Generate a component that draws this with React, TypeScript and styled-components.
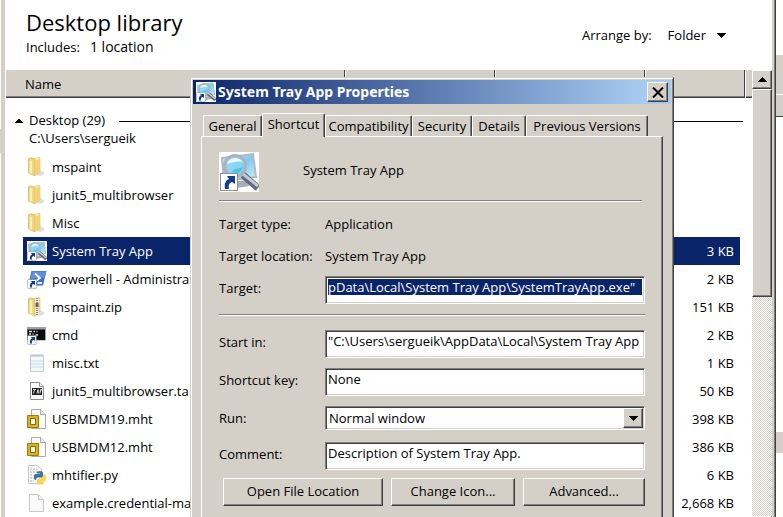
import React from "react";
import styled, { createGlobalStyle, css } from "styled-components";

const face = "#d4d0c8";
const shade = "#808080";
const dark = "#404040";
const navy = "#0a246a";

const Global = createGlobalStyle`
  *, *::before, *::after { box-sizing: border-box; }
  body { margin: 0; background: #fff; color: #000; font: 13px/18px "Open Sans", "Noto Sans", sans-serif; }
  button, input, select { font: inherit; color: inherit; margin: 0; border-radius: 0; outline: none; }
  svg { display: block; flex: none; }
`;

const raised = css`
  background: ${face};
  border: 1px solid;
  border-color: #fff ${dark} ${dark} #fff;
  box-shadow: inset -1px -1px 0 ${shade};
`;

const sunken = css`
  background-color: #fff;
  border: 1px solid;
  border-color: ${shade} #fff #fff ${shade};
  box-shadow: inset 1px 1px 0 ${dark}, inset -1px -1px 0 ${face};
`;

const Desktop = styled.div`
  position: relative;
  display: flex;
  height: 100vh;
  overflow: hidden;
`;

const LeftEdge = styled.div`
  flex: 0 0 5px;
  display: grid;
  grid-template-rows: 129px 24px 1fr;
  border-right: 4px solid ${face};
  & > :nth-child(2) { background: ${face}; }
`;

const RightEdge = styled.div`
  flex: 0 0 7px;
  display: grid;
  grid-template-rows: 55px 39px 23px 315px 21px 1fr;
  & > :nth-child(2), & > :nth-child(5) { background: ${face}; }
  & > :nth-child(3) { background: ${face}; border-top: 1px solid #fff; border-bottom: 1px solid ${dark}; }
`;

const Explorer = styled.main`
  flex: 1;
  min-width: 0;
  display: flex;
  flex-direction: column;
  border-right: 1px solid ${dark};
  box-shadow: inset -1px 0 0 ${shade}, inset -3px 0 0 ${face};
  padding-right: 3px;
`;

const LibraryBar = styled.header`
  flex: 0 0 70px;
  display: flex;
  justify-content: space-between;
  padding: 6px 46px 0 21px;
`;

const LibraryTitle = styled.h1`
  margin: 0;
  font-size: 22px;
  line-height: 32px;
  font-weight: 400;
`;

const Includes = styled.div`
  display: flex;
  gap: 10px;
`;

const LocationLink = styled.a`
  color: inherit;
  font-size: 14px;
  text-decoration: none;
`;

const Arrange = styled.div`
  display: flex;
  align-items: center;
  align-self: flex-start;
  gap: 16px;
  padding-top: 20px;
`;

const ArrangeButton = styled.button`
  display: flex;
  align-items: center;
  gap: 11px;
  padding: 0;
  border: 0;
  background: none;
`;

const Browser = styled.div`
  flex: 1;
  min-height: 0;
  display: flex;
`;

const Listing = styled.section`
  flex: 1;
  min-width: 0;
  overflow: hidden;
`;

const ColumnBar = styled.div`
  display: grid;
  grid-template-columns: 340px 150px 150px 100px 1fr;
  height: 28px;
  background: ${face};
  border-bottom: 1px solid ${dark};
  box-shadow: inset 0 -1px 0 ${shade};
`;

const Column = styled.div`
  padding: 5px 19px;
  border-left: 1px solid #fff;
  border-right: 1px solid ${dark};
  margin-bottom: 1px;
  &:last-child { border-right: 0; }
`;

const GroupHeading = styled.div`
  display: grid;
  grid-template-columns: 8px auto 1fr;
  align-items: center;
  column-gap: 6px;
  padding: 13px 9px 0 10px;
`;

const GroupName = styled.h2`
  margin: 0;
  font: inherit;
`;

const GroupRule = styled.span`
  height: 1px;
  margin: 2px 0 0 8px;
  background: #000;
`;

const GroupPath = styled.div`
  padding: 0 24px;
  height: 24px;
`;

const FileTable = styled.table`
  width: calc(100% - 30px);
  margin: 0 12px 0 18px;
  border-collapse: collapse;
`;

const FileRow = styled.tr<{ $selected?: boolean }>`
  height: 28px;
  ${(p) => p.$selected && css`background: ${navy}; color: #fff;`}
  td { padding: 0 6px 0 4px; }
  td:last-child { text-align: right; }
`;

const FileName = styled.div`
  display: flex;
  align-items: center;
  gap: 5px;
  white-space: nowrap;
`;

const Scrollbar = styled.div`
  flex: 0 0 20px;
  display: grid;
  grid-template-rows: 19px 208px 1fr 20px;
  margin-bottom: -19px;
  background: repeating-conic-gradient(#fff 0 25%, ${face} 0 50%) 0 0 / 2px 2px;
`;

const ScrollButton = styled.button`
  ${raised}
  display: grid;
  place-items: center;
  padding: 0;
`;

const Thumb = styled.div`
  ${raised}
`;

const Dialog = styled.section`
  position: absolute;
  top: 77px;
  left: 190px;
  right: 109px;
  padding: 2px;
  background: ${face};
  border: 1px solid;
  border-color: ${face} ${dark} ${dark} ${face};
  box-shadow: inset 1px 1px 0 #fff, inset -1px -1px 0 ${shade};
`;

const TitleBar = styled.div`
  display: flex;
  align-items: center;
  gap: 2px;
  height: 24px;
  padding: 0 3px;
  background: linear-gradient(90deg, ${navy}, #a6caf0 94%);
  color: #fff;
`;

const DialogTitle = styled.h2`
  flex: 1;
  margin: 0;
  font: bold 14px/20px "Noto Sans", "Open Sans", sans-serif;
`;

const CloseButton = styled.button`
  ${raised}
  display: grid;
  place-items: center;
  width: 21px;
  height: 20px;
  padding: 0;
`;

const Tabs = styled.div`
  display: flex;
  align-items: flex-end;
  height: 32px;
  padding: 0 10px;
`;

const Tab = styled.button<{ $width: number; $active?: boolean }>`
  width: ${(p) => p.$width}px;
  height: 21px;
  padding: 0;
  line-height: 18px;
  white-space: nowrap;
  background: ${face};
  border: 1px solid;
  border-color: #fff ${dark} transparent #fff;
  border-bottom: 0;
  border-radius: 2px 2px 0 0;
  box-shadow: inset -1px 0 0 ${shade};
  ${(p) => p.$active && css`
    position: relative;
    z-index: 1;
    height: 24px;
    margin-bottom: -1px;
    padding-bottom: 4px;
  `}
`;

const Panel = styled.form`
  margin: 0 8px;
  padding: 15px 17px 60px;
  border: 1px solid;
  border-color: #fff ${dark} ${dark} #fff;
  box-shadow: inset -1px -1px 0 ${shade};
`;

const Identity = styled.div`
  display: grid;
  grid-template-columns: 84px 1fr;
  align-items: center;
  height: 40px;
`;

const IdentityName = styled.span`
  padding-bottom: 4px;
`;

const Rule = styled.hr<{ $above: number; $below: number; $inset?: number }>`
  height: 2px;
  margin: ${(p) => p.$above}px ${(p) => p.$inset ?? 0}px ${(p) => p.$below}px 0;
  border: 0;
  background: linear-gradient(${shade} 50%, #fff 50%);
`;

const Field = styled.div<{ $height: number; $gap: number }>`
  display: grid;
  grid-template-columns: 106px 1fr;
  align-items: center;
  height: ${(p) => p.$height}px;
  margin-bottom: ${(p) => p.$gap}px;
`;

const BoxLabel = styled.label`
  padding-bottom: 4px;
`;

const TextBox = styled.input<{ $selected?: boolean }>`
  ${sunken}
  width: 100%;
  height: 28px;
  padding: 2px 2px 8px;
  line-height: 16px;
  ${(p) => p.$selected && css`
    color: #fff;
    background-image: linear-gradient(${navy}, ${navy});
    background-origin: content-box;
    background-size: 100% 16px;
    background-repeat: no-repeat;
  `}
`;

const SelectFrame = styled.div`
  ${sunken}
  display: grid;
  grid-template-columns: 1fr 20px;
  height: 24px;
  padding: 1px;
`;

const Select = styled.select`
  grid-area: 1 / 1 / 2 / 3;
  appearance: none;
  padding: 0 2px;
  border: 0;
  background: none;
  line-height: 18px;
`;

const SelectArrow = styled.span`
  ${raised}
  grid-area: 1 / 2;
  display: grid;
  place-items: center;
  pointer-events: none;
`;

const Actions = styled.div`
  display: grid;
  grid-template-columns: 160px 124px 122px;
  justify-content: end;
  gap: 8px;
`;

const ActionButton = styled.button`
  ${raised}
  height: 28px;
  padding: 0 0 2px;
`;

const Triangle = ({ up, w = 9 }: { up?: boolean; w?: number }) => (
  <svg width={w} height="5" viewBox="0 0 9 5" preserveAspectRatio="none" shapeRendering="crispEdges" aria-hidden="true">
    <path d={up ? "M0 5 4.5 0 9 5Z" : "M0 0 4.5 5 9 0Z"} />
  </svg>
);

const ShortcutArrow = () => (
  <g>
    <rect x="1.5" y="21.5" width="17" height="17" fill="#fff" stroke="#8a8f96" />
    <path d="M6 37c-1-6 1-9 4-10l-2-3h8v8l-3-2c-3 1-4 4-3 7Z" fill="#123f88" />
  </g>
);

const TrayIcon = ({ size }: { size: number }) => (
  <svg width={size} height={size} viewBox="0 0 40 40" aria-hidden="true">
    <defs>
      <linearGradient id={`tray${size}`} x1="0" y1="0" x2="1" y2="1">
        <stop offset="0" stopColor="#d9f3ff" />
        <stop offset="0.5" stopColor="#7dcaf0" />
        <stop offset="1" stopColor="#d2effc" />
      </linearGradient>
    </defs>
    <path fill="#fff" d="M0 0h40v40H0z" />
    <path d="M3 6 34 2l3 23-32 4Z" fill={`url(#tray${size})`} stroke="#b4b9bf" strokeWidth="2" />
    <path d="m10 30 18-2 2 6-18 3Z" fill="#a9aeb5" />
    <path d="m24 23 15 13" stroke="#636b78" strokeWidth="7" />
    <path d="m24 22 15 12" stroke="#c4cad4" strokeWidth="3" />
    <circle cx="16" cy="14" r="10.5" fill="#8bd6f5" fillOpacity=".75" stroke="#a9b4bf" strokeWidth="3" />
    <path d="M8 12c2-7 12-8 16-2-5-1-10 0-16 2Z" fill="#e7faff" />
    <path d="M13 19c4-3 8-2 11-4-1 6-7 8-11 4Z" fill="#4cc7dc" />
    <ShortcutArrow />
  </svg>
);

const FolderIcon = ({ zip }: { zip?: boolean }) => (
  <svg width="20" height="20" viewBox="0 0 20 20" aria-hidden="true">
    <path d="m12 12 6 4-4 3-6-1Z" fill="#c7cbd0" opacity=".6" />
    <path d="M6 1.500 13 .5v15l-7 2Z" fill="#f8e7a2" stroke="#dcc473" strokeWidth=".6" />
    <path d="M1.500 1.500 4 .8 8 3v16l-6.500-3Z" fill="#f1d67a" stroke="#cfae4d" strokeWidth=".6" />
    <path d="M3 3v13l2 1V4Z" fill="#fdf2bd" />
    <path d="M8 4l5-2v13l-5 4Z" fill="#efd277" />
    {zip && (
      <g>
        <path d="M10 2v16" stroke="#eceff1" strokeWidth="3" />
        <path d="M10 1v17" stroke="#63707d" strokeWidth="1.500" strokeDasharray="1 1" />
        <path d="M8.500 6h3v4h-3z" fill="#536c85" />
      </g>
    )}
  </svg>
);

const PowerShellIcon = () => (
  <svg width="20" height="20" viewBox="0 0 40 40" aria-hidden="true">
    <path d="M9 4h30l-7 29H2Z" fill="#3b6fc8" />
    <path d="M10 5h28l-3 12L7 20Z" fill="#5f90dd" />
    <path d="m16 9 10 9-13 10" fill="none" stroke="#fff" strokeWidth="3.500" />
    <path d="M21 28h9" stroke="#fff" strokeWidth="3.500" />
    <ShortcutArrow />
  </svg>
);

const CmdIcon = () => (
  <svg width="20" height="20" viewBox="0 0 40 40" aria-hidden="true">
    <path d="M0 4h38v27H0z" fill="#9da1a5" />
    <path d="M1 9h35v21H1z" fill="#0b0b0b" />
    <path d="M4 13h6m3 0h3m3 0h2M4 18h4m3 0h2m4 2h5" stroke="#ddd" strokeWidth="3" />
    <ShortcutArrow />
  </svg>
);

const TextIcon = () => (
  <svg width="20" height="20" viewBox="0 0 20 20" aria-hidden="true">
    <path d="M3.500 2.500h13v16h-13z" fill="#f4f9fc" stroke="#c3cbd1" />
    <path d="M5 1v3m2-3v3m2-3v3m2-3v3m2-3v3m2-3v3" stroke="#aeb7bd" strokeWidth=".8" />
    <path d="M4 8h12M4 11h12M4 14h12" stroke="#cfe6f2" strokeWidth="1.500" />
  </svg>
);

const TarIcon = () => (
  <svg width="20" height="20" viewBox="0 0 20 20" aria-hidden="true">
    <path d="M3.500 1.500h9l4 4v13h-13Z" fill="#fafafa" stroke="#8f9295" />
    <path d="M12.500 1.500v4h4" fill="#eee" stroke="#8f9295" />
    <path d="M5 7h10v7H5z" fill="#222" />
    <path d="M6 8.500h3M7.500 8.500l-1 4M10 12.500l1-4 .500 4M13 12.500l.5-4h1l-1 2" fill="none" stroke="#fff" strokeWidth=".8" />
  </svg>
);

const MhtIcon = () => (
  <svg width="20" height="20" viewBox="0 0 20 20" aria-hidden="true">
    <path d="M4.500.5h9l5 5v14h-14Z" fill="#fbfbfb" stroke="#a9a9a9" />
    <path d="M13.500.5v5h5" fill="#eee" stroke="#a9a9a9" />
    <path d="M.5 6.500h11v12H.5z" fill="#d9b222" stroke="#9e7a12" />
    <path d="M3.500 9.500h5v6h-5z" fill="#fffbe8" stroke="#856a18" />
  </svg>
);

const PythonIcon = () => (
  <svg width="20" height="20" viewBox="0 0 20 20" aria-hidden="true">
    <path d="M1.500.5h9l4 4v14h-13Z" fill="#fbfbfb" stroke="#c4c7ca" />
    <path d="M3 4h7M3 7h9M3 10h5M3 13h4M3 16h4" stroke="#aab2ba" strokeDasharray="2 1" />
    <path d="M10 7.500q0-1.500 3-1.500t3 2v3q0 1.500-2 1.500h-3q-2 0-2 2.500H8.500Q7 15 7 12t2-3h4v-.5h-3Z" fill="#3774a8" />
    <path d="M16 9.500h1.500Q19 9.500 19 13t-2 3.500h-3v.5h3q0 2.500-3.500 2.500T10 18v-3q0-1.500 2-1.500h2q2 0 2-2Z" fill="#ffd343" />
  </svg>
);

const BlankIcon = () => (
  <svg width="20" height="20" viewBox="0 0 20 20" aria-hidden="true">
    <path d="M2.500 1.500h9l5 5v12h-14Z" fill="#fafafa" stroke="#c4c6c8" />
    <path d="M11.500 1.500v5h5" fill="#f0f0f0" stroke="#c4c6c8" />
  </svg>
);

const files: { name: string; size?: string; icon: React.ReactNode; selected?: boolean }[] = [
  { name: "mspaint", icon: <FolderIcon /> },
  { name: "junit5_multibrowser", icon: <FolderIcon /> },
  { name: "Misc", icon: <FolderIcon /> },
  { name: "System Tray App", size: "3 KB", icon: <TrayIcon size={20} />, selected: true },
  { name: "powerhell - Administrat", size: "2 KB", icon: <PowerShellIcon /> },
  { name: "mspaint.zip", size: "151 KB", icon: <FolderIcon zip /> },
  { name: "cmd", size: "2 KB", icon: <CmdIcon /> },
  { name: "misc.txt", size: "1 KB", icon: <TextIcon /> },
  { name: "junit5_multibrowser.ta", size: "50 KB", icon: <TarIcon /> },
  { name: "USBMDM19.mht", size: "398 KB", icon: <MhtIcon /> },
  { name: "USBMDM12.mht", size: "386 KB", icon: <MhtIcon /> },
  { name: "mhtifier.py", size: "6 KB", icon: <PythonIcon /> },
  { name: "example.credential-ma", size: "2,668 KB", icon: <BlankIcon /> },
];

const tabs = [
  { label: "General", width: 59 },
  { label: "Shortcut", width: 63, active: true },
  { label: "Compatibility", width: 87 },
  { label: "Security", width: 60 },
  { label: "Details", width: 54 },
  { label: "Previous Versions", width: 122 },
];

export default function App() {
  return (
    <Desktop>
      <Global />
      <LeftEdge><i /><i /></LeftEdge>
      <Explorer>
        <LibraryBar>
          <div>
            <LibraryTitle>Desktop library</LibraryTitle>
            <Includes>
              <span>Includes:</span>
              <LocationLink href="#locations">1 location</LocationLink>
            </Includes>
          </div>
          <Arrange>
            <span id="arrange">Arrange by:</span>
            <ArrangeButton type="button" aria-describedby="arrange">Folder <Triangle /></ArrangeButton>
          </Arrange>
        </LibraryBar>
        <Browser>
          <Listing>
            <ColumnBar>
              <Column>Name</Column>
              <Column /><Column /><Column /><Column />
            </ColumnBar>
            <GroupHeading>
              <Triangle up w={8} />
              <GroupName>Desktop (29)</GroupName>
              <GroupRule />
            </GroupHeading>
            <GroupPath>C:\Users\sergueik</GroupPath>
            <FileTable>
              <tbody>
                {files.map((f) => (
                  <FileRow key={f.name} $selected={f.selected}>
                    <td><FileName>{f.icon}{f.name}</FileName></td>
                    <td>{f.size}</td>
                  </FileRow>
                ))}
              </tbody>
            </FileTable>
          </Listing>
          <Scrollbar>
            <ScrollButton type="button" aria-label="Scroll up"><Triangle up /></ScrollButton>
            <Thumb />
            <span />
            <ScrollButton type="button" aria-label="Scroll down"><Triangle /></ScrollButton>
          </Scrollbar>
        </Browser>
      </Explorer>
      <RightEdge><i /><i /><i /><i /><i /><i /></RightEdge>

      <Dialog role="dialog" aria-labelledby="dialog-title">
        <TitleBar>
          <TrayIcon size={20} />
          <DialogTitle id="dialog-title">System Tray App Properties</DialogTitle>
          <CloseButton type="button" aria-label="Close">
            <svg width="12" height="11" viewBox="0 0 12 11" aria-hidden="true">
              <path d="m1 .5 10 10m0-10-10 10" stroke="#000" strokeWidth="2" />
            </svg>
          </CloseButton>
        </TitleBar>
        <Tabs role="tablist">
          {tabs.map((t) => (
            <Tab key={t.label} type="button" role="tab" aria-selected={!!t.active} $width={t.width} $active={t.active}>
              {t.label}
            </Tab>
          ))}
        </Tabs>
        <Panel onSubmit={(e) => e.preventDefault()}>
          <Identity>
            <TrayIcon size={40} />
            <IdentityName>System Tray App</IdentityName>
          </Identity>
          <Rule $above={8} $below={12} $inset={3} />
          <Field $height={20} $gap={12}><span>Target type:</span><span>Application</span></Field>
          <Field $height={20} $gap={10}><span>Target location:</span><span>System Tray App</span></Field>
          <Field $height={28} $gap={0}>
            <BoxLabel htmlFor="target">Target:</BoxLabel>
            <TextBox id="target" $selected defaultValue={'pData\\Local\\System Tray App\\SystemTrayApp.exe"'} />
          </Field>
          <Rule $above={10} $below={14} />
          <Field $height={28} $gap={10}>
            <BoxLabel htmlFor="start">Start in:</BoxLabel>
            <TextBox id="start" defaultValue={'"C:\\Users\\sergueik\\AppData\\Local\\System Tray App'} />
          </Field>
          <Field $height={28} $gap={10}>
            <BoxLabel htmlFor="key">Shortcut key:</BoxLabel>
            <TextBox id="key" defaultValue="None" />
          </Field>
          <Field $height={24} $gap={12}>
            <label htmlFor="run">Run:</label>
            <SelectFrame>
              <Select id="run" defaultValue="Normal window"><option>Normal window</option></Select>
              <SelectArrow><Triangle /></SelectArrow>
            </SelectFrame>
          </Field>
          <Field $height={28} $gap={8}>
            <BoxLabel htmlFor="comment">Comment:</BoxLabel>
            <TextBox id="comment" defaultValue="Description of System Tray App." />
          </Field>
          <Actions>
            <ActionButton type="button">Open File Location</ActionButton>
            <ActionButton type="button">Change Icon...</ActionButton>
            <ActionButton type="button">Advanced...</ActionButton>
          </Actions>
        </Panel>
      </Dialog>
    </Desktop>
  );
}
